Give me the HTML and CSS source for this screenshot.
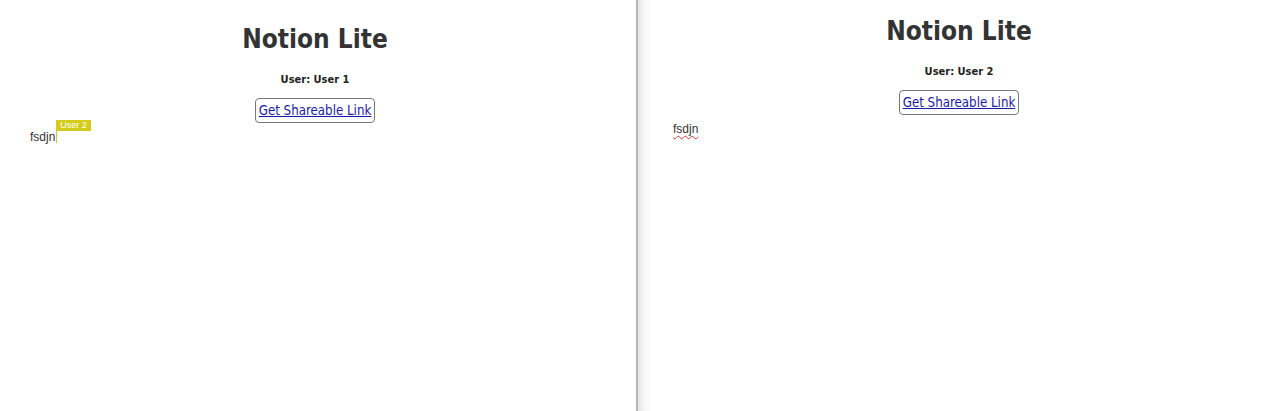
FILE: index.html
```html
<!DOCTYPE html>
<html>
<head>
<meta charset="utf-8">
<link rel="stylesheet" href="styles.css">
</head>
<body>
<div class="screen">
  <section class="pane pane-left">
    <div class="app">
      <h1 class="title">Notion Lite</h1>
      <p class="user">User: User 1</p>
      <button class="share"><span class="share-text">Get Shareable Link</span></button>
      <div class="editor">
        <span class="doc-text">fsdjn</span><span class="caret"><span class="caret-label">User 2</span></span>
      </div>
    </div>
  </section>
  <div class="divider"></div>
  <section class="pane pane-right">
    <div class="app">
      <h1 class="title">Notion Lite</h1>
      <p class="user">User: User 2</p>
      <button class="share"><span class="share-text">Get Shareable Link</span></button>
      <div class="editor">
        <span class="doc-text spell">fsdjn</span>
      </div>
    </div>
  </section>
</div>
</body>
</html>
```
FILE: styles.css
```css
* { box-sizing: border-box; }
html, body { margin: 0; padding: 0; background: #fff; }
.screen {
  display: flex;
  width: 1280px;
  height: 411px;
  overflow: hidden;
}
.pane { height: 411px; }
.pane-left { width: 636px; padding-top: 24px; }
.pane-right {
  flex: 1;
  padding-top: 16px;
  background: linear-gradient(to right, #e4e4e4 0px, #f6f6f6 6px, #fff 14px);
}
.divider {
  width: 2px;
  background: #b5b5b5;
}
.app {
  width: 630px;
  display: flex;
  flex-direction: column;
  align-items: center;
  color: #333;
}
.pane-right .app { width: 642px; }
.title {
  margin: 0;
  font-family: "DejaVu Sans Condensed", "DejaVu Sans", sans-serif;
  font-stretch: condensed;
  font-weight: bold;
  font-size: 26px;
  line-height: 30px;
  color: #333;
}
.user {
  margin: 19px 0 0;
  font-family: "DejaVu Sans Condensed", "DejaVu Sans", sans-serif;
  font-weight: bold;
  font-size: 11px;
  line-height: 14px;
  color: #222;
}
.share {
  margin-top: 11px;
  padding: 3px 3px;
  border: 1px solid #777;
  border-radius: 4px;
  background: #fff;
  font-family: "DejaVu Sans Condensed", "DejaVu Sans", sans-serif;
  font-size: 13.2px;
  line-height: 17px;
  color: #1a1aa6;
}
.share-text { text-decoration: underline; }
.editor {
  align-self: stretch;
  padding-left: 30px;
  margin-top: 7px;
  font-family: "Liberation Sans", Arial, sans-serif;
  font-size: 12px;
  line-height: 14px;
  color: #333;
}
.pane-right .editor { padding-left: 35px; margin-top: 7px; }
.caret {
  position: relative;
  display: inline-block;
  width: 1px;
  height: 12px;
  margin-left: 1px;
  vertical-align: -2px;
  background: #d4cc1a;
}
.caret-label {
  position: absolute;
  left: 0;
  bottom: 12px;
  padding: 0 4px;
  background: #d4cc1a;
  color: #fff;
  font-size: 9px;
  line-height: 11px;
  white-space: nowrap;
}
.spell {
  text-decoration: underline wavy #d33;
  text-decoration-thickness: 1px;
  text-underline-offset: 2px;
}
```
